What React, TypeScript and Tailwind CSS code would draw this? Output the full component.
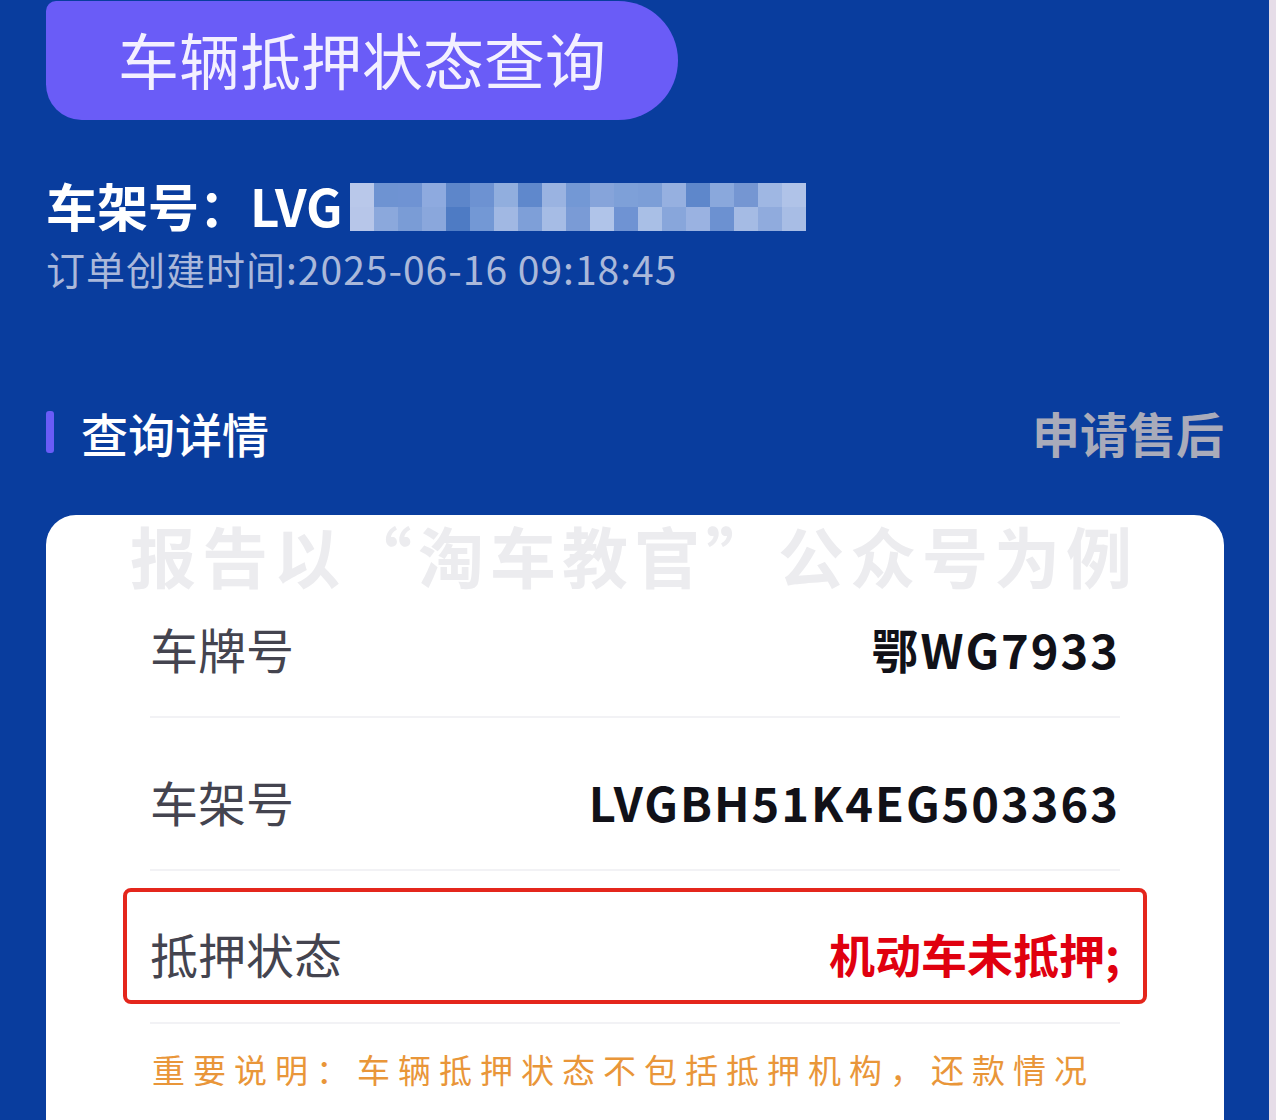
const FONT = { fontFamily: '"Noto Sans CJK SC", "Noto Sans", sans-serif' };

// pixelated cover over the rest of the VIN, two rows of blocks
const MOSAIC_TOP = [
  "#b9c8ea", "#6e93d2", "#6f93d3", "#8eaadf", "#5d86ca", "#6d92d2", "#91aede", "#5f88cc",
  "#9ab3e1", "#7398d5", "#86a4da", "#7ea0d8", "#7c9ed7", "#96b0e0", "#5e87cb", "#8aa8dc",
  "#7596d2", "#9fb7e3", "#b0c3e8",
];
const MOSAIC_BOTTOM = [
  "#b7c6e9", "#8ba8dc", "#7a9cd6", "#8aa7dc", "#4e7bc4", "#7398d5", "#a1b8e3", "#7e9fd8",
  "#a6bce5", "#7a9bd6", "#b0c4e9", "#6f93d3", "#a9bfe6", "#88a6db", "#9ab2e1", "#6c91d1",
  "#a5bbe4", "#90abdd", "#a8bde5",
];

function Mosaic() {
  return (
    <span className="inline-flex flex-col ml-[8px] translate-y-[2px]">
      <span className="flex">
        {MOSAIC_TOP.map((c, i) => (
          <span key={i} className="block w-[24px] h-[24px]" style={{ backgroundColor: c }} />
        ))}
      </span>
      <span className="flex">
        {MOSAIC_BOTTOM.map((c, i) => (
          <span key={i} className="block w-[24px] h-[24px]" style={{ backgroundColor: c }} />
        ))}
      </span>
    </span>
  );
}

function Row({ label, value, valueClass }: { label: string; value: string; valueClass?: string }) {
  return (
    <>
      <span className="text-[48px] text-[#44444f] leading-none">{label}</span>
      <span className={"font-bold leading-none " + (valueClass ?? "text-[47px] tracking-[2px] text-[#111118]")}>
        {value}
      </span>
    </>
  );
}

export default function App() {
  return (
    <div className="w-[1276px] h-[1120px] overflow-hidden flex bg-[#e6dde8]" style={FONT}>
      <div className="w-[1269px] h-full bg-[#093d9e] flex flex-col pl-[46px] pr-[45px]">
        {/* title pill */}
        <div className="w-[632px] h-[119px] mt-[1px] bg-[#6a5cf7] rounded-tl-[10px] rounded-bl-[36px] rounded-r-[60px] flex items-center pl-[72px]">
          <span className="text-[61px] leading-none text-[#f3f0ff] -translate-y-[2px]">车辆抵押状态查询</span>
        </div>

        <div className="mt-[60px] h-[50px] flex items-center">
          <span className="text-[51px] font-bold text-white leading-none">车架号：LVG</span>
          <Mosaic />
        </div>

        <div className="mt-[19px] text-[39px] leading-none text-[#aab8da] tracking-[1px]">
          订单创建时间:2025-06-16 09:18:45
        </div>

        <div className="mt-[120px] flex items-center justify-between">
          <div className="flex items-center">
            <span className="block w-[8px] h-[42px] rounded-[3px] bg-[#6a5cf7]" />
            <span className="ml-[27px] text-[47px] leading-none text-white font-medium">查询详情</span>
          </div>
          <span className="text-[48px] leading-none font-bold text-[#a9abba]">申请售后</span>
        </div>

        <div className="mt-[59px] flex-1 bg-white rounded-t-[30px] flex flex-col">
          <div className="pt-[6px] pl-[84px] text-[66px] font-bold leading-none text-[#ececef] tracking-[6px] whitespace-nowrap">
            报告以“淘车教官”公众号为例
          </div>

          <div className="px-[104px]">
            <div className="border-b-2 border-[#f2f2f5] pb-[7px]">
              <div className="flex items-center justify-between h-[122px]">
                <Row label="车牌号" value="鄂WG7933" />
              </div>
            </div>
            <div className="border-b-2 border-[#f2f2f5] pt-[25px] pb-[10px]">
              <div className="flex items-center justify-between h-[116px]">
                <Row label="车架号" value="LVGBH51K4EG503363" />
              </div>
            </div>
          </div>

          <div className="px-[77px] mt-[17px]">
            <div className="border-[4px] border-[#e4261c] rounded-[8px] pl-[23px] pr-[23px] pt-[14px] h-[116px] flex items-center justify-between">
              <Row label="抵押状态" value="机动车未抵押;" valueClass="text-[46px] text-[#e0000f]" />
            </div>
          </div>

          <div className="px-[104px] mt-[18px]">
            <div className="border-t-2 border-[#f2f2f5]" />
            <div className="mt-[29px] pl-[2px] text-[33px] leading-none text-[#e99639] tracking-[8px] whitespace-nowrap">
              重要说明：车辆抵押状态不包括抵押机构，还款情况
            </div>
          </div>
        </div>
      </div>
    </div>
  );
}
